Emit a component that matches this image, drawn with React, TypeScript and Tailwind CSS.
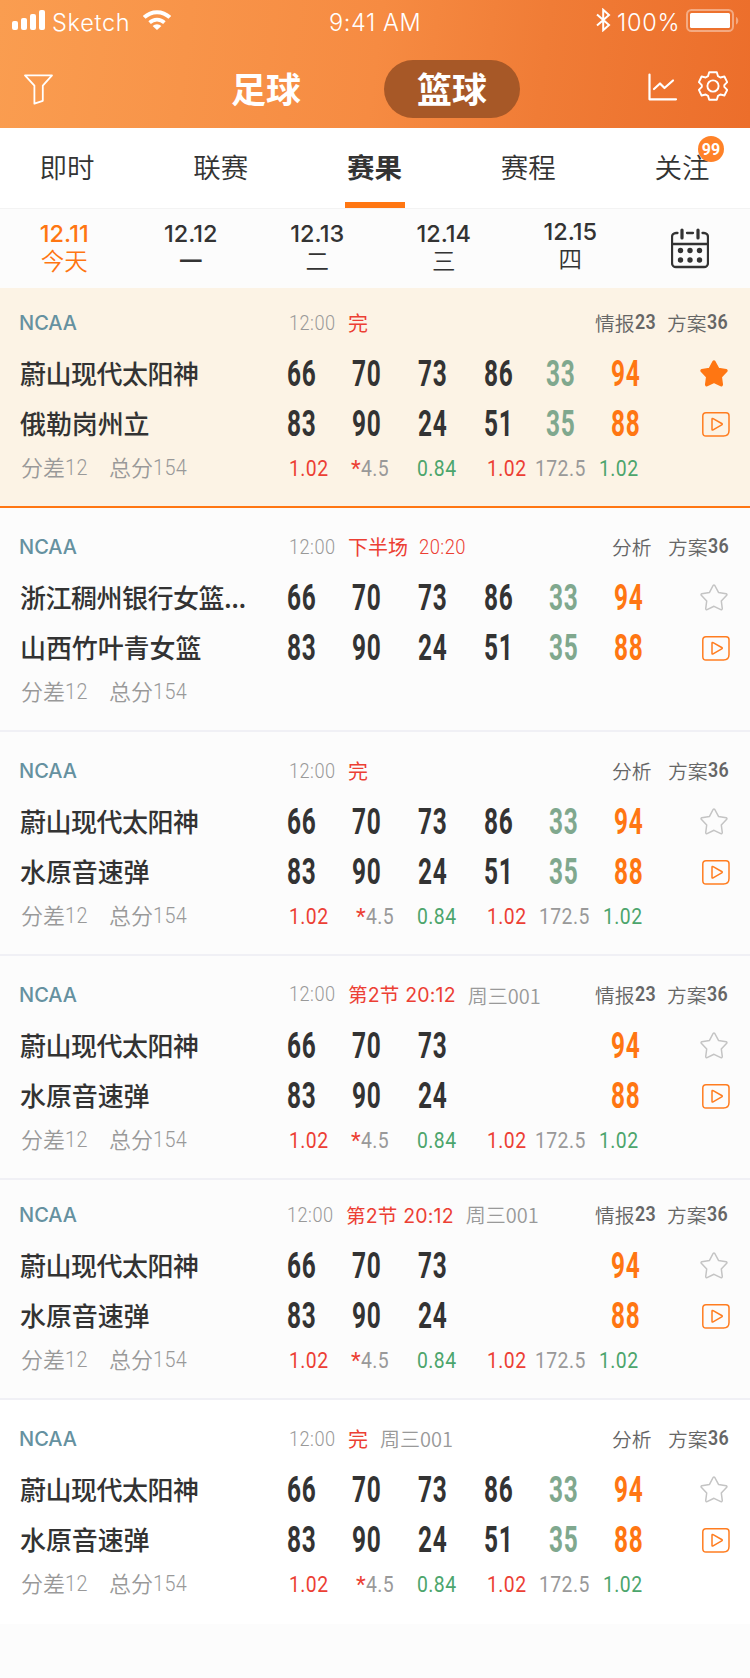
import { useState } from "react";
import clsx from "clsx";

type Match = {
  id: number;
  home: string;
  away: string;
  status: string;
  clock?: string;
  clockPlain?: boolean;
  round?: string;
  roundLow?: boolean;
  info?: string;
  scores: string[][];
  odds?: boolean;
  starred?: boolean;
  compact?: boolean;
  shift?: boolean;
  timeLeft?: boolean;
  white?: boolean;
};

const full = [
  ["66", "70", "73", "86", "33", "94"],
  ["83", "90", "24", "51", "35", "88"],
];
const partial = [
  ["66", "70", "73", "", "", "94"],
  ["83", "90", "24", "", "", "88"],
];

const matches: Match[] = [
  { id: 1, home: "蔚山现代太阳神", away: "俄勒岗州立", status: "完", info: "23", scores: full, odds: true, starred: true, compact: true },
  { id: 2, home: "浙江稠州银行女篮...", away: "山西竹叶青女篮", status: "下半场", clock: "20:20", scores: full, shift: true },
  { id: 3, home: "蔚山现代太阳神", away: "水原音速弹", status: "完", scores: full, odds: true, shift: true },
  { id: 4, home: "蔚山现代太阳神", away: "水原音速弹", status: "第2节", clock: "20:12", clockPlain: true, round: "周三001", roundLow: true, info: "23", scores: partial, odds: true },
  { id: 5, home: "蔚山现代太阳神", away: "水原音速弹", status: "第2节", clock: "20:12", clockPlain: true, round: "周三001", info: "23", scores: partial, odds: true, compact: true, timeLeft: true },
  { id: 6, home: "蔚山现代太阳神", away: "水原音速弹", status: "完", round: "周三001", scores: full, odds: true, shift: true, white: true },
];

const tabs = ["即时", "联赛", "赛果", "赛程", "关注"];

const days = [
  { date: "12.11", week: "今天" },
  { date: "12.12", week: "一" },
  { date: "12.13", week: "二" },
  { date: "12.14", week: "三" },
  { date: "12.15", week: "四" },
];

const StatusBar = () => (
  <div className="flex h-10 items-center pr-[11px] pl-3 font-['Inter',sans-serif] text-[23.5px] leading-10 font-[350] text-white">
    <div className="flex w-[317px] items-center">
      <svg width="33" height="20" viewBox="0 0 33 20" fill="white">
        <rect y="11" width="6" height="9" rx="2" />
        <rect x="9" y="8" width="6" height="12" rx="2" />
        <rect x="18" y="4" width="6" height="16" rx="2" />
        <rect x="27" width="6" height="20" rx="2" />
      </svg>
      <span className="ml-[7px] w-[83px] pt-[5px] tracking-[0.7px]">Sketch</span>
      <svg className="ml-2" width="28" height="20" viewBox="0 0 28 20" fill="none" stroke="white" strokeWidth="4">
        <path d="M1.2 7.4a18.2 18.2 0 0 1 25.6 0" />
        <path d="M6.6 12.6a10.6 10.6 0 0 1 14.8 0" strokeWidth="3.6" />
        <path d="M9.6 16 14 20l4.4-4a6.5 6.5 0 0 0-8.8 0z" fill="white" stroke="none" />
      </svg>
    </div>
    <span className="w-[267px] pt-[5px] tracking-[0.6px]">9:41 AM</span>
    <svg width="15" height="24" viewBox="0 0 15 24" fill="none" stroke="white" strokeWidth="2">
      <path d="M1 6.5 13 17 7.2 22.2V1.8L13 7 1 17.5" />
    </svg>
    <span className="ml-[6px] w-[69px] pt-[5px] tracking-[0.7px]">100%</span>
    <svg width="53" height="23" viewBox="0 0 53 23" fill="none">
      <rect x="1" y="1" width="46" height="21" rx="4.5" stroke="white" strokeOpacity=".4" strokeWidth="2" />
      <rect x="4" y="4" width="40" height="15" rx="1.5" fill="white" />
      <path d="M50 8v7.5c3-1 3-6.5 0-7.5z" fill="white" fillOpacity=".4" />
    </svg>
  </div>
);

const Header = () => (
  <header className="h-32 bg-[linear-gradient(97deg,#fa9d50_0%,#f68b42_50%,#f07c36_72%,#ec6e2b_100%)]">
    <StatusBar />
    <div className="flex h-[88px] items-center pr-[22px] pl-6">
      <svg className="mt-[10px]" width="29" height="31" viewBox="0 0 29 31" fill="none" stroke="white" strokeWidth="1.8" strokeLinejoin="round">
        <path d="M1 1.3h27L18.8 11.6v15.2L10.4 29.6V11.6z" />
      </svg>
      <div className="mt-[10px] ml-[145px] flex h-[58px] w-[136px] items-center justify-center text-[35px] font-bold text-white">
        <span className="pb-[2px]">足球</span>
      </div>
      <div className="mt-[10px] ml-[50px] flex h-[58px] w-[136px] items-center justify-center rounded-full bg-[#a75827] text-[35px] font-bold text-white">
        <span className="pb-px">篮球</span>
      </div>
      <svg className="mt-[5px] ml-auto" width="30" height="28" viewBox="0 0 30 28" fill="none" stroke="white" strokeWidth="2.2" strokeLinecap="round" strokeLinejoin="round">
        <path d="M1.5 1.5v24.8H28" />
        <path d="m6 16 6-5.5 4.5 4.5L25 7.5" />
      </svg>
      <svg className="mt-[4px] ml-5" width="30" height="30" viewBox="0 0 30 30" fill="none" stroke="white" strokeWidth="1.9" strokeLinejoin="round">
        <path d="M11.2 1.2h7.6l1.2 4 2.3 1.3 4.1-1 2.8 5.7-2.9 3v1.700l2.900 3-2.800 5.600-4.100-1-2.300 1.300-1.200 4h-7.600l-1.200-4-2.300-1.300-4.100 1-2.700-5.600 2.900-3v-1.700l-2.900-3 2.700-5.700 4.100 1 2.300-1.300z" />
        <circle cx="15" cy="15" r="5.6" />
      </svg>
    </div>
  </header>
);

const CalendarIcon = () => (
  <svg width="38" height="41" viewBox="0 0 38 41" fill="none" stroke="#333" strokeWidth="2.3" strokeLinecap="round">
    <path d="M6.5 5H5a4 4 0 0 0-4 4v26a4 4 0 0 0 4 4h28a4 4 0 0 0 4-4V9a4 4 0 0 0-4-4h-1.5M16 5h6M1 16h36" />
    <path d="M11 2v8M27 2v8" strokeWidth="3.2" />
    <g fill="#333" stroke="none">
      <circle cx="9.5" cy="22.5" r="2.7" />
      <circle cx="19" cy="22.5" r="2.7" />
      <circle cx="28.5" cy="22.5" r="2.7" />
      <circle cx="9.5" cy="32" r="2.7" />
      <circle cx="19" cy="32" r="2.7" />
      <circle cx="28.5" cy="32" r="2.7" />
    </g>
  </svg>
);

const Star = ({ active }: { active?: boolean }) => (
  <svg width="28" height="27" viewBox="0 0 28 27" fill={active ? "#ff7612" : "none"} stroke={active ? "#ff7612" : "#c4c4c4"} strokeWidth="1.5" strokeLinejoin="round">
    <path d="M13.1 1.5q.9-1 1.7 0l3.7 6.900 7.700 1.400q1.200.5.500 1.500l-5.400 5.700 1 7.700q-.2 1.300-1.500.9L14 22.300l-6.900 3.300q-1.200.4-1.400-.9l1-7.700-5.400-5.700q-.7-1 .5-1.500l7.700-1.400z" />
  </svg>
);

const Play = () => (
  <svg width="28" height="25" viewBox="0 0 28 25" fill="none" stroke="#ff7d20" strokeWidth="1.5" strokeLinejoin="round">
    <path d="M4 .8h20q3 0 3 3v14.700q0 5.500-5.500 5.500H4q-3.200 0-3.200-3.200V4Q.8.800 4 .8z" />
    <path d="M10 7.200q0-1.200 1.100-.6l8.600 4.900q1.100.7 0 1.400l-8.600 5q-1.100.6-1.100-.6z" />
  </svg>
);

// narrow digits
const Num = ({ children, className }: { children: string; className?: string }) => (
  <span className={clsx("inline-block origin-left font-['Roboto',sans-serif] tracking-[0.5px] whitespace-pre", className)}>
    {children}
  </span>
);

const ScoreRow = ({ scores, shift }: { scores: string[]; shift?: boolean }) => (
  <div
    className={clsx(
      "grid w-[370px] pt-[2px] pl-[0.5px] text-[37px] leading-[50px] font-bold text-[#333]",
      shift ? "grid-cols-[65px_66px_66px_65px_65px_43px]" : "grid-cols-[65px_66px_66px_62px_65px_46px]",
    )}
  >
    {scores.map((score, i) => (
      <span
        key={i}
        className={clsx(
          "block h-[50px] w-[44px] origin-left scale-x-[0.66] font-['Roboto',sans-serif] tracking-[1px]",
          i === 4 && "text-[#80a88e]",
          i === 5 && "text-[#ff7612]",
        )}
      >
        {score}
      </span>
    ))}
  </div>
);

const MatchRow = ({ match }: { match: Match }) => {
  const { shift } = match;
  return (
    <section
      className={clsx(
        "border-b-2 pr-5 pl-5",
        match.compact ? "h-[220px] pt-5" : "h-[224px] pt-6",
        match.starred ? "border-[#ff7612] bg-[#fcf3e5]" : match.white ? "border-white bg-white" : "border-[#f0f0f5]",
      )}
    >
      <div className="flex h-[30px] items-center text-[20px] leading-[30px] font-[350] whitespace-nowrap">
        <span className="w-[269px] font-['Inter',sans-serif] font-[450] text-[#6591a0]">
          <span className="-ml-px">NCAA</span>
        </span>
        <div className={clsx("flex", match.timeLeft && "-ml-[2px]")}>
          <Num className="w-[59px] scale-x-[0.91] text-[#999]">12:00</Num>
          <span className="font-normal text-[#ec3f34]">
            {match.clockPlain ? (
              <span className="font-['Inter','Noto_Sans_CJK_SC',sans-serif] text-[19.5px] tracking-[0.2px]">
                {match.status} {match.clock}
              </span>
            ) : (
              match.status
            )}
          </span>
          {match.clock && !match.clockPlain && (
            <Num className="ml-[11px] scale-x-[0.92] text-[#ec3f34]">{match.clock}</Num>
          )}
          {match.round && (
            <span className={clsx("ml-3 text-[#999]", match.roundLow && "pt-[2px]")}>{match.round}</span>
          )}
        </div>
        <div className="ml-auto flex text-[19.8px] text-[#666]">
          {match.info ? (
            <span className="flex w-[72px]">
              情报<Num className="scale-x-[0.9] font-semibold">{match.info}</Num>
            </span>
          ) : (
            <span className="w-[56px]">分析</span>
          )}
          <span className={clsx("flex", match.info ? "w-[63px]" : "w-[62px]")}>
            方案<Num className="scale-x-[0.9] font-semibold">36</Num>
          </span>
        </div>
      </div>
      <div className="mt-[10px] flex h-[50px] items-center">
        <span className="w-[266px] text-[26px] leading-[50px] font-medium tracking-[-0.5px] text-[#333]">{match.home}</span>
        <ScoreRow scores={match.scores[0]} shift={shift} />
        <span className="ml-11">
          <Star active={match.starred} />
        </span>
      </div>
      <div className="flex h-[50px] items-center">
        <span className="w-[266px] text-[26px] leading-[50px] font-medium tracking-[-0.1px] text-[#333]">{match.away}</span>
        <ScoreRow scores={match.scores[1]} shift={shift} />
        <span className="mt-[2px] ml-[46px]">
          <Play />
        </span>
      </div>
      <div className="flex h-10 items-center text-[22.5px] leading-10 text-[#999]">
        <div className="flex w-[269px] pl-px text-[22px] font-[350]">
          <span className="flex w-[88px]">
            <span className="-mt-[2px]">分差</span>
            <Num className="scale-x-[0.9]">12</Num>
          </span>
          <span className="flex">
            <span className="-mt-[2px]">总分</span>
            <Num className="scale-x-[0.9]">154</Num>
          </span>
        </div>
        {match.odds && (
          <div className="grid grid-cols-[62px_66px_70px_48px_64px_50px] font-normal">
            <Num className="scale-x-[0.86] text-[#ec3f34]">1.02</Num>
            <span className={clsx("flex", shift && "pl-[5px]")}>
              <Num className="w-[10px] text-[#ec3f34]">*</Num>
              <Num className="scale-x-[0.86]">4.5</Num>
            </span>
            <Num className="scale-x-[0.86] text-[#4ca56c]">0.84</Num>
            <Num className="scale-x-[0.86] text-[#ec3f34]">1.02</Num>
            <Num className={clsx("scale-x-[0.86]", shift && "ml-[4px]")}>172.5</Num>
            <Num className={clsx("scale-x-[0.86] text-[#4ca56c]", shift && "ml-[4px]")}>1.02</Num>
          </div>
        )}
      </div>
    </section>
  );
};

const App = () => {
  const [tab, setTab] = useState<string>("赛果");
  const [day, setDay] = useState<string>("12.11");

  return (
    <div className="h-[1678px] w-[750px] overflow-hidden bg-[#fcfcfc] font-['Noto_Sans_CJK_SC',sans-serif]">
      <Header />
      <nav className="flex h-20 justify-between bg-white pr-[38px] pl-[37px]">
        {tabs.map((name) => (
          <button
            key={name}
            onClick={() => setTab(name)}
            className={clsx(
              "relative flex h-20 w-[60px] flex-col items-center justify-between border-b-[6px] pt-[17px] text-[27.5px] leading-[42px] whitespace-nowrap text-[#333]",
              tab === name ? "border-[#ff7612] font-bold" : "border-transparent font-[350]",
            )}
          >
            {name}
            {name === "关注" && (
              <span className="absolute top-2 left-[46px] flex size-[26px] items-center justify-center rounded-full bg-[#ff8228] pt-px font-['Roboto',sans-serif] text-[16px] leading-none font-bold text-white">
                99
              </span>
            )}
          </button>
        ))}
      </nav>
      <div className="flex h-20 border-t border-[#f3f3f3] pl-px text-[#333]">
        {days.map(({ date, week }) => (
          <button
            key={date}
            onClick={() => setDay(date)}
            className={clsx(
              "flex w-[126.5px] flex-col items-center",
              day === date && "text-[#ff7612]",
              date === "12.15" ? "pt-[9px]" : "pt-[11px]",
            )}
          >
            <span className="font-['Inter',sans-serif] text-[23.5px] leading-7 font-medium">{date}</span>
            <span className={clsx("text-[23.5px] leading-6", week === "一" ? "font-medium" : "font-[350]")}>{week}</span>
          </button>
        ))}
        <div className="mt-[19px] ml-[37px]">
          <CalendarIcon />
        </div>
      </div>
      {matches.map((match) => (
        <MatchRow key={match.id} match={match} />
      ))}
    </div>
  );
};

export default App;
